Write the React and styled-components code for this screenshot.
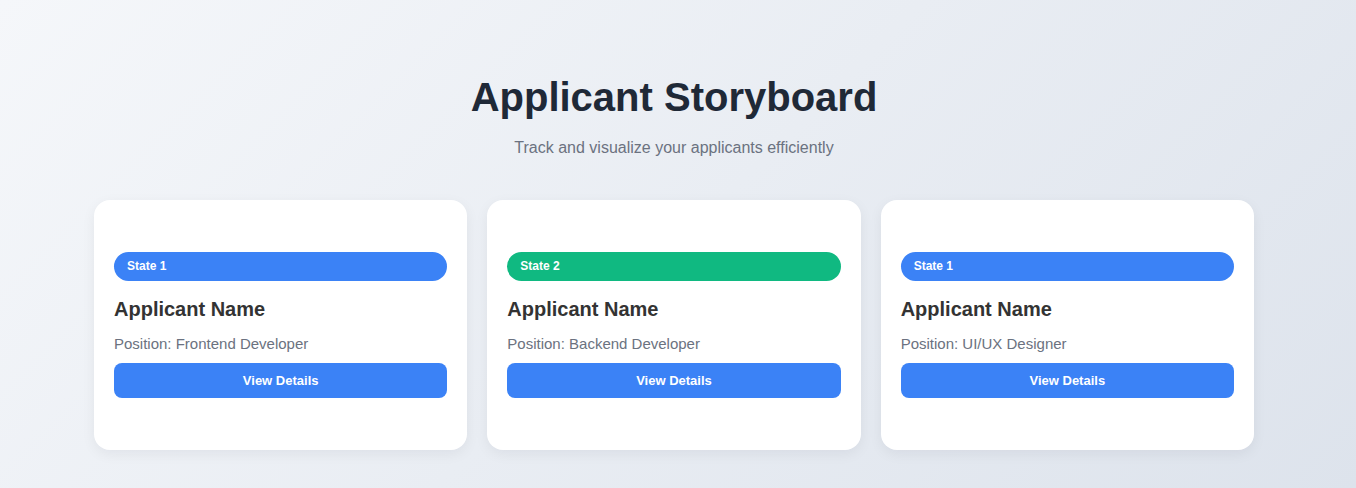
import styled, { createGlobalStyle } from "styled-components";

const GlobalStyle = createGlobalStyle`
  html, body {
    margin: 0;
    padding: 0;
  }
  body {
    font-family: "Liberation Sans", Arial, sans-serif;
    background: linear-gradient(135deg, #f5f7fa 0%, #dde3ec 100%);
    min-height: 100vh;
  }
`;

const applicants = [
  { state: "State 1", tone: "blue", position: "Frontend Developer" },
  { state: "State 2", tone: "green", position: "Backend Developer" },
  { state: "State 1", tone: "blue", position: "UI/UX Designer" },
];

const App = () => {
  return (
    <>
      <GlobalStyle />
      <Page>
        <Container>
          <Header>
            <Title>Applicant Storyboard</Title>
            <Subtitle>Track and visualize your applicants efficiently</Subtitle>
          </Header>
          <CardGrid>
            {applicants.map((a, i) => (
              <Card key={i}>
                <StateBadge tone={a.tone}>{a.state}</StateBadge>
                <Name>Applicant Name</Name>
                <Position>Position: {a.position}</Position>
                <DetailsButton>View Details</DetailsButton>
              </Card>
            ))}
          </CardGrid>
        </Container>
      </Page>
    </>
  );
};

const Page = styled.div`
  min-height: 100vh;
  padding: 74px 8px 40px 0;
  box-sizing: border-box;
`;

const Container = styled.div`
  max-width: 1200px;
  margin: 0 auto;
  padding: 0 20px;
  box-sizing: border-box;
`;

const Header = styled.header`
  text-align: center;
  margin-bottom: 43px;
`;

const Title = styled.h1`
  margin: 0 0 19px;
  font-size: 40px;
  font-weight: 700;
  line-height: 46px;
  color: #1f2937;
`;

const Subtitle = styled.p`
  margin: 0;
  font-size: 16px;
  line-height: 18px;
  color: #6b7280;
`;

const CardGrid = styled.div`
  display: grid;
  grid-template-columns: repeat(3, 1fr);
  gap: 20px;
`;

const Card = styled.div`
  height: 250px;
  box-sizing: border-box;
  padding: 0 20px;
  background: #ffffff;
  border-radius: 16px;
  box-shadow: 0 4px 14px rgba(15, 23, 42, 0.06);
  display: flex;
  flex-direction: column;
  justify-content: center;
`;

const StateBadge = styled.span`
  display: block;
  height: 29px;
  line-height: 29px;
  padding: 0 13px;
  border-radius: 999px;
  font-size: 12px;
  font-weight: 700;
  color: #ffffff;
  background: ${(p) => (p.tone === "green" ? "#10b981" : "#3b82f6")};
`;

const Name = styled.h3`
  margin: 17px 0 0;
  font-size: 20px;
  line-height: 23px;
  font-weight: 700;
  color: #333333;
`;

const Position = styled.p`
  margin: 14px 0 0;
  font-size: 15px;
  line-height: 17px;
  color: #6b7280;
`;

const DetailsButton = styled.button`
  margin-top: 11px;
  height: 35px;
  width: 100%;
  border: none;
  border-radius: 8px;
  background: #3b82f6;
  color: #ffffff;
  font-family: inherit;
  font-size: 13px;
  font-weight: 700;
  cursor: pointer;
`;

export default App;
